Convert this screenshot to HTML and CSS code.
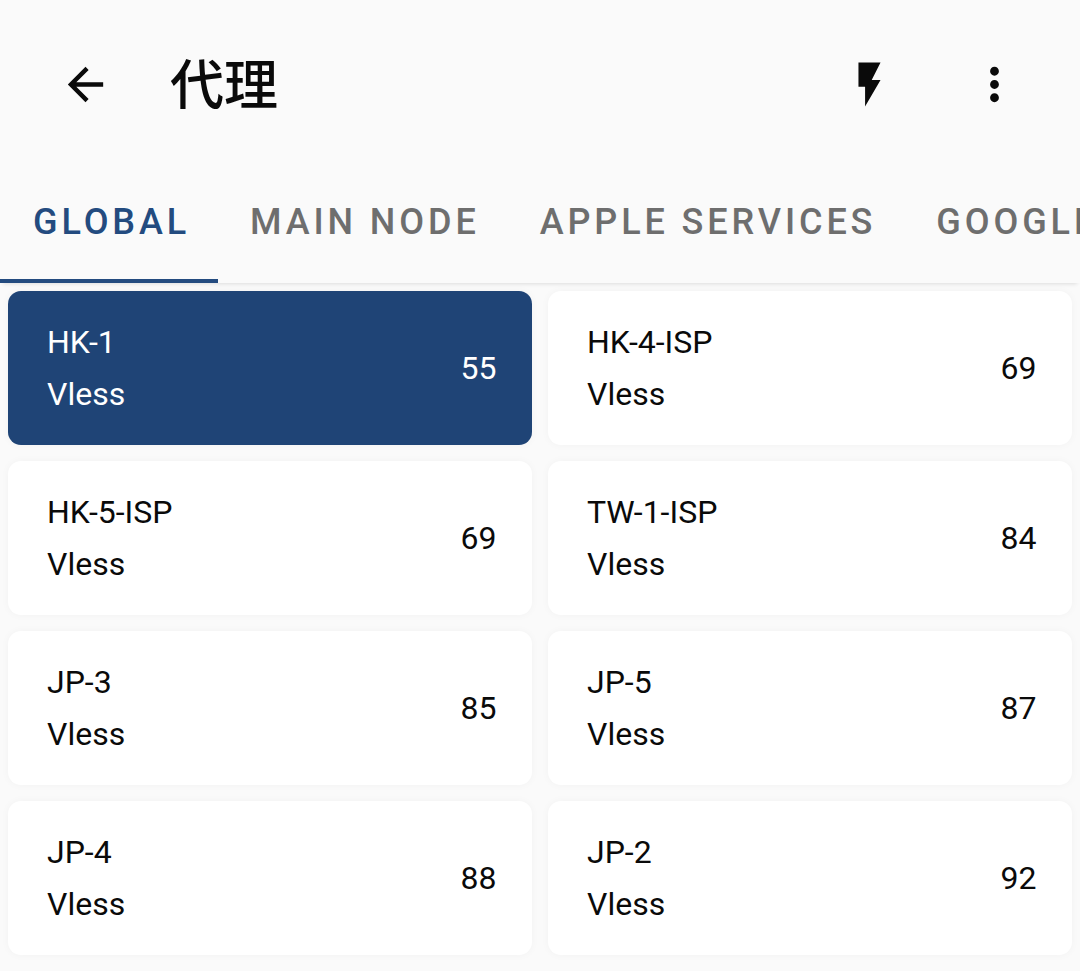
FILE: index.html
```html
<!DOCTYPE html>
<html lang="zh">
<head>
<meta charset="utf-8">
<title>代理</title>
<link rel="stylesheet" href="styles.css">
</head>
<body>
<div class="page">
  <header class="appbar">
    <button class="icon-btn back" aria-label="back">
      <svg viewBox="0 0 24 24" width="53" height="53"><path d="M20 11H7.83l5.59-5.59L12 4l-8 8 8 8 1.41-1.41L7.83 13H20v-2z"/></svg>
    </button>
    <h1 class="title">代理</h1>
    <div class="actions">
      <button class="icon-btn bolt" aria-label="test">
        <svg viewBox="0 0 24 24" width="53" height="53"><path d="M7 2v11h3v9l7-12h-4l4-8z"/></svg>
      </button>
      <button class="icon-btn more" aria-label="more">
        <svg viewBox="0 0 24 24" width="53" height="53"><path d="M12 8c1.1 0 2-.9 2-2s-.9-2-2-2-2 .9-2 2 .9 2 2 2zm0 2c-1.1 0-2 .9-2 2s.9 2 2 2 2-.9 2-2-.9-2-2-2zm0 6c-1.1 0-2 .9-2 2s.9 2 2 2 2-.9 2-2-.9-2-2-2z"/></svg>
      </button>
    </div>
  </header>
  <nav class="tabs">
    <div class="tab active">GLOBAL</div>
    <div class="tab">MAIN NODE</div>
    <div class="tab">APPLE SERVICES</div>
    <div class="tab">GOOGLE</div>
  </nav>
  <main class="grid">
    <div class="card selected"><div class="info"><div>HK-1</div><div>Vless</div></div><div class="delay">55</div></div>
    <div class="card"><div class="info"><div>HK-4-ISP</div><div>Vless</div></div><div class="delay">69</div></div>
    <div class="card"><div class="info"><div>HK-5-ISP</div><div>Vless</div></div><div class="delay">69</div></div>
    <div class="card"><div class="info"><div>TW-1-ISP</div><div>Vless</div></div><div class="delay">84</div></div>
    <div class="card"><div class="info"><div>JP-3</div><div>Vless</div></div><div class="delay">85</div></div>
    <div class="card"><div class="info"><div>JP-5</div><div>Vless</div></div><div class="delay">87</div></div>
    <div class="card"><div class="info"><div>JP-4</div><div>Vless</div></div><div class="delay">88</div></div>
    <div class="card"><div class="info"><div>JP-2</div><div>Vless</div></div><div class="delay">92</div></div>
  </main>
</div>
</body>
</html>
```
FILE: styles.css
```css
* { box-sizing: border-box; }
html, body { margin: 0; padding: 0; height: 100%; overflow: hidden; }
body { background: #fafafa; font-family: Roboto, "Noto Sans CJK SC", sans-serif; color: #0a0a0a; }
.page { width: 1080px; height: 971px; overflow: hidden; }
.appbar { height: 168px; display: flex; align-items: center; padding: 0 59px 0 59px; background: #fafafa; }
.icon-btn { width: 53px; height: 53px; padding: 0; border: 0; background: none; display: block; flex: none; }
.icon-btn svg { display: block; fill: #0a0a0a; }
.title { margin: 0 0 4px 58px; font-family: "Noto Sans CJK SC", sans-serif; font-size: 54px; line-height: 60px; font-weight: 500; flex: 1; }
.actions { display: flex; gap: 72px; }
.tabs { height: 115px; display: flex; white-space: nowrap; overflow: hidden; background: #fafafa; box-shadow: 0 4px 4px -3px rgba(0,0,0,.12); }
.tab { flex: none; padding: 0 28px 0 32px; height: 115px; line-height: 109px; font-size: 36px; font-weight: 500; letter-spacing: 3.9px; color: #6e6e6e; }
.tab.active { color: #234b7f; border-bottom: 4px solid #234b7f; width: 218px; padding-left: 33px; }
.grid { display: grid; grid-template-columns: 524px 524px; gap: 16px; padding: 8px; }
.card { height: 154px; background: #fff; border-radius: 13px; display: flex; align-items: center; justify-content: space-between; padding: 0 35.5px 0 39px; font-size: 32px; line-height: 52px; box-shadow: 0 0 8px rgba(0,0,0,.035); }
.card.selected { background: #1f4476; color: #fff; }
```
